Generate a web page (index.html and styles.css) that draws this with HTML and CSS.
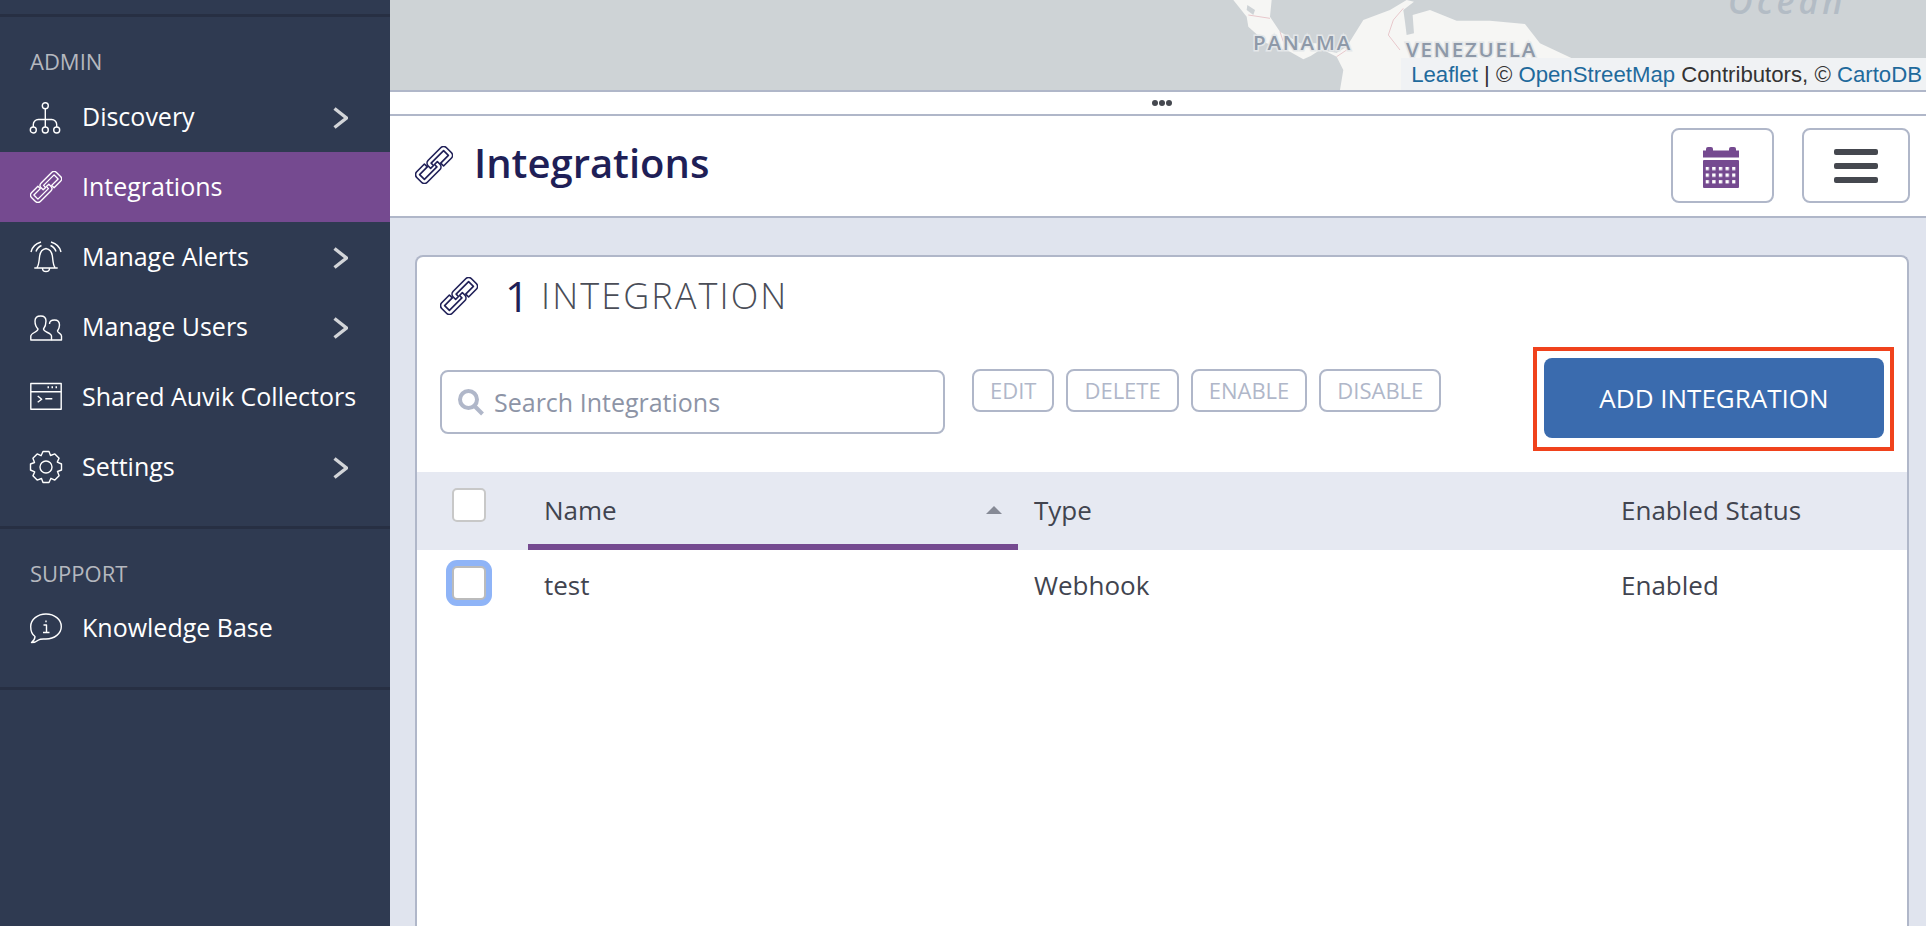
FILE: index.html
```html
<!DOCTYPE html>
<html lang="en">
<head>
    <meta charset="UTF-8">
    <title>Integrations</title>
    <link rel="stylesheet" href="styles.css">
</head>
<body>
    <svg class="defs" width="0" height="0" aria-hidden="true">
        <symbol id="link-icon" viewBox="2 2 28 28">
            <g transform="rotate(-45 16 16)" fill="none" stroke="currentColor" stroke-width="1.200" stroke-linejoin="round">
                <path d="M11.500 10.500 H3.500 A3 3 0 0 0 .5 13.500 V18.500 A3 3 0 0 0 3.500 21.500 H16.500 A3 3 0 0 0 19.500 18.500 V16 H16.500 V18.500 H3.500 V13.500 H11.500 Z"/>
                <path d="M20.500 21.500 H28.500 A3 3 0 0 0 31.500 18.500 V13.500 A3 3 0 0 0 28.500 10.500 H15.500 A3 3 0 0 0 12.500 13.500 V16 H15.500 V13.500 H28.500 V18.500 H20.500 Z"/>
            </g>
        </symbol>
    </svg>

    <aside class="sidebar">
        <section class="nav-section">
            <h4 class="nav-label">ADMIN</h4>
            <a class="nav-item">
                <svg class="nav-icon" viewBox="0 0 32 32"><circle cx="15.300" cy="4.700" r="3"/><circle cx="3.300" cy="29" r="3"/><circle cx="15.300" cy="29" r="3"/><circle cx="26.700" cy="29" r="3"/><path d="M15.300 7.700 V26 M3.300 26 V23.500 A5 5 0 0 1 8.300 18.500 H21.700 A5 5 0 0 1 26.700 23.500 V26"/></svg>
                <span class="nav-text">Discovery</span>
                <svg class="chevron" viewBox="0 0 15 22"><path d="M1.500 1.500 L13.500 11 L1.500 20.500"/></svg>
            </a>
            <a class="nav-item active">
                <svg class="nav-icon"><use href="#link-icon"/></svg>
                <span class="nav-text">Integrations</span>
            </a>
            <a class="nav-item">
                <svg class="nav-icon" viewBox="0 0 32 32"><path d="M1 11 C2 6 6 2.500 11 1 M6 10.500 C7 7.500 9 5.500 11.500 4.500 M31 11 C30 6 26 2.500 21 1 M26 10.500 C25 7.500 23 5.500 20.500 4.500"/><path d="M4.300 27 H27.700 M7 26.500 C9 24 9 20 9.500 16 C10 11 13 8 16 7.500 C19 8 22 11 22.500 16 C23 20 23 24 25 26.500 M12.500 27.500 A3.500 3 0 0 0 19.500 27.500"/></svg>
                <span class="nav-text">Manage Alerts</span>
                <svg class="chevron" viewBox="0 0 15 22"><path d="M1.500 1.500 L13.500 11 L1.500 20.500"/></svg>
            </a>
            <a class="nav-item">
                <svg class="nav-icon" viewBox="0 0 32 32"><path d="M.800 29 V25 C.800 22 8 21 8 18 C6 16 5 13 5 10 C5 7 7 5 10.700 5 C14 5 16 7 16 10 C16 13 15 16 13.500 18 C13.500 21 21.500 22 21.500 25 V29 Z"/><path d="M19.500 13 C19.500 10.500 21.500 9 24.500 9 C27.500 9 29.500 10.500 29.500 14 C29.500 16 28.500 18.500 27.500 20 C27.500 22 31.500 22.500 31.500 25 V29 H21.500"/></svg>
                <span class="nav-text">Manage Users</span>
                <svg class="chevron" viewBox="0 0 15 22"><path d="M1.500 1.500 L13.500 11 L1.500 20.500"/></svg>
            </a>
            <a class="nav-item">
                <svg class="nav-icon" viewBox="0 0 32 32"><rect x=".800" y="2.500" width="30.400" height="25.700"/><path d="M.800 10.700 H31.200 M7.700 15 L11.700 18.300 L7.700 21.300 M15.300 17.700 H22.300"/><path class="dots" d="M17.500 6.300 H19 M21.500 6.300 H23 M25.500 6.300 H27"/></svg>
                <span class="nav-text">Shared Auvik Collectors</span>
            </a>
            <a class="nav-item">
                <svg class="nav-icon" viewBox="0 0 32 32"><polygon points="13,.5 19,.5 20.5,4.5 24.84,2.92 29.08,7.16 27.31,11.05 31.5,13 31.5,19 27.5,20.5 29.08,24.84 24.84,29.08 20.95,27.31 19,31.5 13,31.5 11.5,27.5 7.16,29.08 2.92,24.84 4.69,20.95 .5,19 .5,13 4.5,11.5 2.92,7.16 7.16,2.92 11.05,4.69"/><circle cx="16" cy="16" r="6"/></svg>
                <span class="nav-text">Settings</span>
                <svg class="chevron" viewBox="0 0 15 22"><path d="M1.500 1.500 L13.500 11 L1.500 20.500"/></svg>
            </a>
        </section>
        <section class="nav-section">
            <h4 class="nav-label">SUPPORT</h4>
            <a class="nav-item">
                <svg class="nav-icon" viewBox="0 0 32 32"><path d="M1.500 30.500 C3.500 29 5 27.500 5 24.500 C2 22.500 .7 19 .7 14.500 C.7 7.500 7.500 2 16 2 S31.300 7.500 31.300 14.500 S24.500 27 16 27 C13 27 10.500 26.500 8.500 28 C6.500 29.800 4 30.500 1.500 30.500 Z"/><path d="M16 8.500 V10.200 M13.500 13 H16.500 V20.500 M13 20.500 H19.500"/></svg>
                <span class="nav-text">Knowledge Base</span>
            </a>
        </section>
    </aside>

    <main class="main">
        <div class="map">
            <svg class="map-canvas" viewBox="0 0 1536 90">
                <g class="map-shapes" transform="translate(800 0) scale(.3333)">
                    <path class="land" d="M130 0 L170 50 L175 80 L230 130 L300 155 L340 178 L362 168 L390 150 L440 158 L470 140 L520 60 L600 30 L650 0 L672 5 L640 30 L645 65 L650 105 L672 100 L668 45 L720 30 L800 62 L900 62 L1005 72 L1050 130 L1200 200 L1200 270 L450 270 L460 210 L440 170 L400 150 L380 130 L330 130 L270 95 L240 50 L245 0 Z"/>
                    <path class="water" d="M172 15 L195 30 L190 45 L170 30 Z"/>
                    <path class="border" d="M640 25 L610 60 L595 105 L630 150 M175 45 L240 55 M270 95 L280 125 M440 170 L470 150"/>
                </g>
                <text class="map-label" x="863" y="50">PANAMA</text>
                <text class="map-label" x="1016" y="57">VENEZUELA</text>
                <text class="map-ocean" x="1338" y="14">Ocean</text>
            </svg>
            <div class="attribution"><a>Leaflet</a> | © <a>OpenStreetMap</a> Contributors, © <a>CartoDB</a></div>
        </div>
        <div class="splitter"><span></span><span></span><span></span></div>

        <header class="page-header">
            <svg class="page-icon"><use href="#link-icon"/></svg>
            <h1>Integrations</h1>
            <div class="header-buttons">
                <button class="icon-btn calendar-btn">
                    <svg width="36" height="41" viewBox="0 0 36 41">
                        <defs><pattern id="cal-dots" patternUnits="userSpaceOnUse" x="2.500" y="19.800" width="6.670" height="6.670"><rect width="3.400" height="3.400" fill="#fff"/></pattern></defs>
                        <rect x="3" y="0" width="7" height="6" rx="2" fill="#754a90"/>
                        <rect x="26" y="0" width="7" height="6" rx="2" fill="#754a90"/>
                        <rect x="0" y="3.500" width="36" height="7" fill="#754a90"/>
                        <rect x="0" y="13" width="36" height="28" rx="1" fill="#754a90"/>
                        <rect x="2.500" y="19.800" width="30.100" height="17" fill="url(#cal-dots)"/>
                    </svg>
                </button>
                <button class="icon-btn menu-btn"><span></span><span></span><span></span></button>
            </div>
        </header>

        <div class="content">
            <div class="card">
                <div class="card-head">
                    <svg class="card-icon"><use href="#link-icon"/></svg>
                    <span class="count">1</span>
                    <span class="count-label">INTEGRATION</span>
                </div>
                <div class="toolbar">
                    <div class="search">
                        <svg width="28" height="28" viewBox="0 0 28 28"><circle cx="11.500" cy="11.500" r="8.500"/><path d="M17.500 18 L25.500 26"/></svg>
                        <input type="text" placeholder="Search Integrations">
                    </div>
                    <div class="actions">
                        <button class="action-btn">EDIT</button>
                        <button class="action-btn">DELETE</button>
                        <button class="action-btn">ENABLE</button>
                        <button class="action-btn">DISABLE</button>
                    </div>
                    <div class="highlight">
                        <button class="add-btn">ADD INTEGRATION</button>
                    </div>
                </div>
                <div class="table-row table-head">
                    <div class="cell-check"><input class="check" type="checkbox"></div>
                    <div class="cell cell-sorted">Name<span class="sort-caret"></span></div>
                    <div class="cell">Type</div>
                    <div class="cell">Enabled Status</div>
                </div>
                <div class="table-row">
                    <div class="cell-check"><input class="check focused" type="checkbox"></div>
                    <div class="cell">test</div>
                    <div class="cell">Webhook</div>
                    <div class="cell">Enabled</div>
                </div>
            </div>
        </div>
    </main>
</body>
</html>
```

FILE: styles.css
```css
* {
    box-sizing: border-box;
}

body {
    display: flex;
    height: 926px;
    margin: 0;
    overflow: hidden;
    font-family: "Open Sans", sans-serif;
    font-size: 26px;
    color: #41444f;
    background-color: #e0e4ee;
}

.defs {
    position: absolute;
}

/* Sidebar */
.sidebar {
    flex: 0 0 390px;
    width: 390px;
    padding-top: 14px;
    background-color: #2f3a51;
}

.nav-section {
    padding-bottom: 24px;
    border-top: 3px solid #272f43;
}

.nav-label {
    height: 30px;
    margin: 29px 0 6px 30px;
    font-size: 22px;
    font-weight: 400;
    line-height: 30px;
    color: #b5b8bf;
}

.nav-section + .nav-section .nav-label {
    margin-bottom: 5px;
}

.nav-item {
    display: flex;
    align-items: center;
    height: 70px;
    padding: 0 42px 0 30px;
    color: #fff;
}

.nav-item.active {
    background-color: #754a90;
}

.nav-icon {
    flex: 0 0 32px;
    width: 32px;
    height: 32px;
    overflow: visible;
    fill: none;
    stroke: #fff;
    stroke-width: 1.4;
    stroke-linejoin: round;
    color: #fff;
}

.nav-icon .dots {
    stroke-width: 2;
}

.nav-text {
    flex: 1;
    margin-left: 20px;
    padding-bottom: 2px;
    font-size: 25px;
    white-space: nowrap;
}

.chevron {
    width: 15px;
    height: 22px;
    margin-top: 2px;
    fill: none;
    stroke: #d3d5d9;
    stroke-width: 3.4;
}

.sidebar .nav-section:last-child {
    border-bottom: 3px solid #272f43;
}

/* Main column */
.main {
    display: flex;
    flex: 1;
    flex-direction: column;
    min-width: 0;
}

.map {
    position: relative;
    height: 90px;
    overflow: hidden;
    background-color: #ced3d6;
}

.map-canvas {
    display: block;
    width: 100%;
    height: 90px;
}

.map-shapes {
    filter: blur(.6px);
}

.land {
    fill: #f6f6f4;
}

.water {
    fill: #ced3d6;
}

.border {
    fill: none;
    stroke: #e8c8cc;
    stroke-width: 3;
}

.map-label {
    font-family: "Open Sans", sans-serif;
    font-size: 20.5px;
    font-weight: 600;
    letter-spacing: 1.8px;
    fill: #8e99a8;
    stroke: #e4e7e9;
    stroke-width: 3px;
    paint-order: stroke;
}

.map-ocean {
    font-family: "Open Sans", sans-serif;
    font-size: 34px;
    font-style: italic;
    font-weight: 600;
    letter-spacing: 4px;
    fill: #b3bcc5;
}

.attribution {
    position: absolute;
    right: 0;
    bottom: 0;
    height: 32px;
    padding: 0 4px 0 10px;
    font-family: "Liberation Sans", Arial, sans-serif;
    font-size: 22.2px;
    line-height: 34px;
    color: #333;
    white-space: nowrap;
    background-color: #f0f2f4;
}

.attribution a {
    color: #1f6a9c;
}

.splitter {
    display: flex;
    flex: 0 0 26px;
    align-items: center;
    justify-content: center;
    gap: 1px;
    padding-left: 8px;
    background-color: #fff;
    border-top: 2px solid #b0b7c9;
    border-bottom: 2px solid #b0b7c9;
}

.splitter span {
    width: 6px;
    height: 6px;
    border-radius: 50%;
    background-color: #45484f;
}

.page-header {
    display: flex;
    flex: 0 0 102px;
    align-items: center;
    padding: 0 16px 2px 25px;
    background-color: #fff;
    border-bottom: 2px solid #b0b7c9;
}

.page-icon {
    width: 38px;
    height: 38px;
    color: #1f1f57;
}

.page-header h1 {
    flex: 1;
    margin: 0 0 6px 21px;
    font-size: 40px;
    font-weight: 600;
    color: #1f1f57;
}

.header-buttons {
    display: flex;
    gap: 28px;
}

.icon-btn {
    display: flex;
    flex-direction: column;
    align-items: center;
    justify-content: center;
    height: 75px;
    padding: 0;
    background-color: #fff;
    border: 2px solid #b0b7c9;
    border-radius: 8px;
}

.calendar-btn {
    width: 103px;
    padding: 4px 4px 0 0;
}

.menu-btn {
    gap: 8px;
    width: 108px;
    padding-top: 2px;
}

.menu-btn span {
    width: 44px;
    height: 6px;
    border-radius: 2px;
    background-color: #45484f;
}

/* Card */
.content {
    flex: 1;
    min-height: 0;
    padding: 37px 17px 0 25px;
}

.card {
    height: 100%;
    background-color: #fff;
    border: 2px solid #b0b7c9;
    border-bottom: 0;
    border-radius: 8px 8px 0 0;
}

.card-head {
    display: flex;
    align-items: center;
    height: 90px;
    padding: 0 0 13px 23px;
}

.card-icon {
    width: 38px;
    height: 38px;
    margin-right: 27px;
    color: #1f1f57;
}

.count {
    margin-right: 12px;
    font-size: 42px;
    font-weight: 400;
    color: #1f1f57;
}

.count-label {
    font-size: 36px;
    font-weight: 300;
    letter-spacing: 2.1px;
    color: #4a4d57;
}

.toolbar {
    display: flex;
    align-items: flex-start;
    height: 104px;
    margin-bottom: 21px;
    padding: 0 13px 0 23px;
}

.search {
    display: flex;
    align-items: center;
    gap: 9px;
    width: 505px;
    height: 64px;
    margin-top: 23px;
    padding-left: 15px;
    border: 2px solid #b0b7c9;
    border-radius: 8px;
}

.search svg {
    flex: 0 0 28px;
    fill: none;
    stroke: #b0b7c9;
    stroke-width: 4;
}

.search input {
    flex: 1;
    min-width: 0;
    padding: 0;
    font-family: inherit;
    font-size: 25px;
    color: #41444f;
    border: 0;
    outline: 0;
}

.search input::placeholder {
    color: #8d94a6;
    opacity: 1;
}

.actions {
    display: flex;
    gap: 12px;
    margin: 22px 0 0 27px;
}

.action-btn {
    height: 43px;
    padding: 0 16px 2px;
    font-family: inherit;
    font-size: 22px;
    color: #b0b7c9;
    background-color: #fff;
    border: 2px solid #b0b7c9;
    border-radius: 8px;
}

.highlight {
    margin-left: auto;
    padding: 7px 6px 9px 7px;
    border: 4px solid #f0421c;
}

.add-btn {
    display: block;
    width: 340px;
    height: 80px;
    padding: 0;
    font-family: inherit;
    font-size: 26px;
    color: #fff;
    background-color: #3a6bae;
    border: 0;
    border-radius: 8px;
}

/* Table */
.table-row {
    display: grid;
    grid-template-columns: 111px 490px 587px 1fr;
    height: 72px;
}

.table-head {
    height: 78px;
    background-color: #e6e9f2;
}

.cell {
    display: flex;
    align-items: center;
    padding: 0 0 2px 16px;
}

.cell-check {
    padding: 16px 0 0 35px;
}

.cell-sorted {
    justify-content: space-between;
    padding: 4px 16px 0 16px;
    border-bottom: 6px solid #754a90;
}

.sort-caret {
    border-right: 8px solid transparent;
    border-bottom: 8px solid #868a96;
    border-left: 8px solid transparent;
}

.check {
    display: block;
    width: 34px;
    height: 34px;
    margin: 0;
    background-color: #fff;
    border: 2px solid #c8c8c8;
    border-radius: 5px;
    appearance: none;
}

.check.focused {
    border-color: #bbb;
    box-shadow: 0 0 0 6px #8fb4f7;
}
```
